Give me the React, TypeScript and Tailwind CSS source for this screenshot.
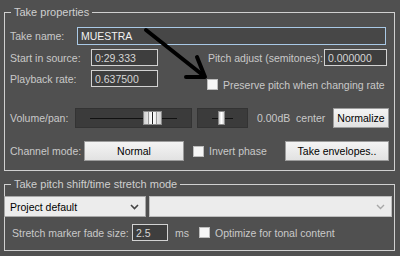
const font = "font-['Liberation_Sans','Arial',sans-serif]";

function TextBox({ value, width, blue }: { value: string; width: string; blue?: boolean }) {
  return (
    <div
      className={`${width} h-full shrink-0 flex items-center px-[3px] border ${
        blue ? 'border-[#a9c9e6] bg-[#474747] text-[#f2f2f2]' : 'border-[#d2d2d2] bg-[#3e3e3e] text-[#d6d6d6]'
      }`}
    >
      {value}
    </div>
  );
}

function Button({ label, width }: { label: string; width: string }) {
  return (
    <div
      className={`${width} h-full shrink-0 flex items-center justify-center border border-[#9c9c9c] bg-gradient-to-b from-[#f4f4f4] to-[#e2e2e2] text-black whitespace-nowrap`}
    >
      {label}
    </div>
  );
}

function Check() {
  return <div className="w-[11px] h-[11px] border border-[#bdbdbd] bg-[#f6f6f6] shrink-0" />;
}

function Slider({ width, left, right }: { width: string; left: string; right: string }) {
  return (
    <div className={`${width} h-full shrink-0 bg-[#3b3b3b] border border-[#333] flex items-center`}>
      <div className={`${left} h-px bg-[#111] ml-[14px]`} />
      <div className="h-[14px] flex border border-[#8a8a8a] bg-gradient-to-r from-[#cfcfcf] via-white to-[#cfcfcf]">
        {right === 'big' ? (
          <>
            <div className="w-[4px]" />
            <div className="w-px bg-[#999]" />
            <div className="w-[3px]" />
            <div className="w-px bg-[#222]" />
            <div className="w-[3px]" />
            <div className="w-px bg-[#999]" />
            <div className="w-[4px]" />
          </>
        ) : (
          <div className="w-[5px]" />
        )}
      </div>
      <div className="flex-1 h-px bg-[#111] mr-[14px]" />
    </div>
  );
}

const lbl = 'shrink-0 whitespace-nowrap';

export default function App() {
  return (
    <div className={`relative w-[400px] h-[256px] overflow-hidden bg-[#505050] text-[#c9c9c9] text-[10.5px] leading-[14px] ${font}`}>
      {/* Take properties */}
      <fieldset className="ml-[4px] mt-[5px] w-[391px] h-[166px] border border-[#d0d0d0]">
        <legend className="ml-[6px] px-[3px] text-[11px] text-[#cfcfcf]">Take properties</legend>

        <div className="mt-[8px] ml-[5px] h-[18px] flex items-center">
          <div className={`w-[67px] ${lbl}`}>Take name:</div>
          <TextBox value="MUESTRA" width="w-[309px]" blue />
        </div>

        <div className="mt-[4px] ml-[5px] h-[17px] flex items-center">
          <div className={`w-[81px] ${lbl}`}>Start in source:</div>
          <TextBox value="0:29.333" width="w-[67px]" />
          <div className={`ml-[50px] w-[116px] ${lbl}`}>Pitch adjust (semitones):</div>
          <TextBox value="0.000000" width="w-[63px]" />
        </div>

        <div className="mt-[4px] ml-[5px] flex items-start">
          <div className="h-[17px] flex items-center">
            <div className={`w-[81px] ${lbl}`}>Playback rate:</div>
            <TextBox value="0.637500" width="w-[67px]" />
          </div>
          <div className="ml-[49px] mt-[8px] h-[13px] flex items-center gap-[5px]">
            <Check />
            <span className={lbl}>Preserve pitch when changing rate</span>
          </div>
        </div>

        <div className="mt-[17px] ml-[5px] mr-[5px] h-[20px] flex items-center">
          <div className={`w-[65px] ${lbl}`}>Volume/pan:</div>
          <Slider width="w-[117px]" left="w-[53px]" right="big" />
          <div className="ml-[5px] h-full">
            <Slider width="w-[51px]" left="w-[6px]" right="small" />
          </div>
          <div className={`ml-[9px] ${lbl}`}>0.00dB&nbsp; center</div>
          <div className="ml-auto h-full">
            <Button label="Normalize" width="w-[56px]" />
          </div>
        </div>

        <div className="mt-[13px] ml-[5px] mr-[5px] h-[20px] flex items-center">
          <div className={`w-[74px] ${lbl}`}>Channel mode:</div>
          <Button label="Normal" width="w-[100px]" />
          <div className="ml-[9px] flex items-center gap-[5px]">
            <Check />
            <span className={lbl}>Invert phase</span>
          </div>
          <div className="ml-auto h-full">
            <Button label="Take envelopes.." width="w-[104px]" />
          </div>
        </div>
      </fieldset>

      {/* Take pitch shift/time stretch mode */}
      <fieldset className="ml-[4px] mt-[6px] w-[391px] h-[74px] border border-[#d0d0d0]">
        <legend className="ml-[6px] px-[3px] text-[11px] text-[#cfcfcf]">Take pitch shift/time stretch mode</legend>

        <div className="mt-[5px] -ml-px h-[21px] flex gap-[3px]">
          <div className="w-[142px] h-full flex items-center justify-between pl-[5px] pr-[6px] border border-[#a8a8a8] bg-[#ececec] text-black">
            <span className={lbl}>Project default</span>
            <svg width="9" height="6" viewBox="0 0 9 6">
              <path d="M1 1 L4.5 4.5 L8 1" fill="none" stroke="#444" strokeWidth="1.6" />
            </svg>
          </div>
          <div className="w-[243px] h-full flex items-center justify-end pr-[6px] border border-[#bdbdbd] bg-[#ececec]">
            <svg width="9" height="6" viewBox="0 0 9 6">
              <path d="M1 1 L4.5 4.5 L8 1" fill="none" stroke="#a8a8a8" strokeWidth="1.4" />
            </svg>
          </div>
        </div>

        <div className="mt-[7px] ml-[7px] h-[17px] flex items-center">
          <div className={`w-[120px] ${lbl}`}>Stretch marker fade size:</div>
          <TextBox value="2.5" width="w-[36px]" />
          <div className={`ml-[7px] w-[24px] ${lbl}`}>ms</div>
          <div className="flex items-center gap-[5px]">
            <Check />
            <span className={lbl}>Optimize for tonal content</span>
          </div>
        </div>
      </fieldset>

      {/* annotation arrow */}
      <svg className="absolute inset-0 pointer-events-none" width="400" height="256" viewBox="0 0 400 256">
        <g stroke="#000" strokeWidth="4" strokeLinecap="round" fill="none">
          <path d="M146 30 L204 76" />
          <path d="M197 57 L205 77 L186 77" strokeLinejoin="round" />
        </g>
      </svg>
    </div>
  );
}
